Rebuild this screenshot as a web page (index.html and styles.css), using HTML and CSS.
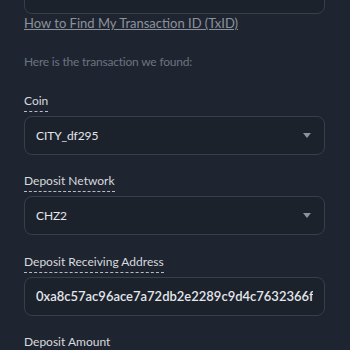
FILE: index.html
```html
<!DOCTYPE html>
<html>
<head>
<meta charset="utf-8">
<link rel="stylesheet" href="styles.css">
</head>
<body>
<div class="page">
  <div class="box top-box"></div>
  <a class="help-link" href="#">How to Find My Transaction ID (TxID)</a>
  <p class="found">Here is the transaction we found:</p>

  <div class="field first">
    <span class="label">Coin</span>
    <div class="box select">
      <span class="value">CITY_df295</span>
      <span class="caret"></span>
    </div>
  </div>

  <div class="field">
    <span class="label">Deposit Network</span>
    <div class="box select">
      <span class="value">CHZ2</span>
      <span class="caret"></span>
    </div>
  </div>

  <div class="field">
    <span class="label">Deposit Receiving Address</span>
    <div class="box">
      <span class="value address">0xa8c57ac96ace7a72db2e2289c9d4c7632366f0a1b2c3</span>
    </div>
  </div>

  <div class="field">
    <span class="label plain">Deposit Amount</span>
  </div>
</div>
</body>
</html>
```

FILE: styles.css
```css
html, body {
  margin: 0;
  padding: 0;
  background: #1f2530;
  overflow: hidden;
}
.page {
  width: 301px;
  padding-left: 24px;
  font-family: "Lato", "Open Sans", sans-serif;
  font-size: 12px;
  display: flex;
  flex-direction: column;
}
.box {
  box-sizing: border-box;
  height: 39px;
  border: 1px solid #383f4b;
  border-radius: 8px;
  background: #1c222c;
  display: flex;
  align-items: center;
  padding: 0 11px;
  overflow: hidden;
}
.top-box {
  margin-top: -25px;
}
.help-link {
  font-size: 13px;
  color: #8c929c;
  text-decoration: underline;
  line-height: 18px;
  align-self: flex-start;
}
.found {
  margin: 21.5px 0 0;
  color: #6c7380;
  line-height: 16px;
  letter-spacing: -0.2px;
}
.field {
  display: flex;
  flex-direction: column;
  margin-top: 18.5px;
}
.field.first {
  margin-top: 23px;
}
.label {
  align-self: flex-start;
  color: #d7dade;
  line-height: 16px;
  padding-bottom: 2px;
  border-bottom: 1px dashed #b9bdc3;
  margin-bottom: 4px;
}
.label.plain {
  border-bottom-color: transparent;
}
.value {
  color: #e3e6ea;
  white-space: nowrap;
  flex: 1;
  letter-spacing: -0.1px;
}
.address {
  font-size: 13px;
  font-weight: 600;
  overflow: hidden;
  letter-spacing: 0;
}
.caret {
  width: 0;
  height: 0;
  border-left: 4px solid transparent;
  border-right: 4px solid transparent;
  border-top: 5px solid #8c929c;
  margin-right: 2px;
}
```
